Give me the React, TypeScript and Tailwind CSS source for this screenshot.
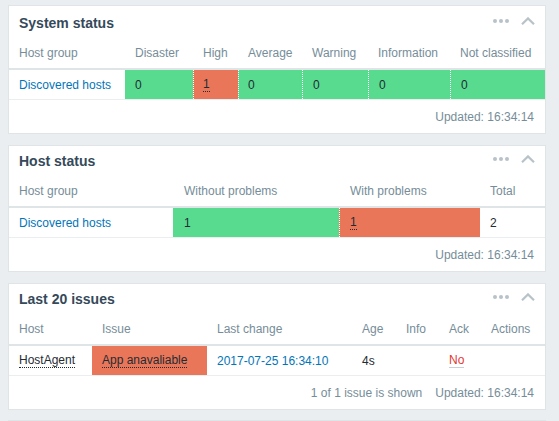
import React from "react";

const Icons = () => (
  <div className="flex items-center gap-[12px] mb-[4px]">
    <svg width="16" height="4" viewBox="0 0 16 4">
      <circle cx="2" cy="2" r="2" fill="#b7c2c9" />
      <circle cx="8" cy="2" r="2" fill="#b7c2c9" />
      <circle cx="14" cy="2" r="2" fill="#b7c2c9" />
    </svg>
    <svg width="14" height="8" viewBox="0 0 14 8">
      <polyline points="1,7.2 7,1.4 13,7.2" fill="none" stroke="#b7c2c9" strokeWidth="2.2" />
    </svg>
  </div>
);

function Panel({ title, first, last, children }: { title: string; first?: boolean; last?: boolean; children: React.ReactNode }) {
  return (
    <div className={(last ? "-mt-px " : "") + "w-[538px] bg-white border border-[#dfe4e7] shrink-0"}>
      <div className={(first ? "h-[32px] pt-[2px] " : "h-[30px] ") + "flex items-center justify-between pl-[10px] pr-[10px]"}>
        <div className="text-[14px] font-bold text-[#35495a] leading-none">{title}</div>
        <Icons />
      </div>
      {children}
    </div>
  );
}

const Footer = ({ children }: { children: React.ReactNode }) => (
  <div className="h-[33px] flex items-center justify-end gap-[13px] pr-[11px] text-[#768d99]">{children}</div>
);

const Dotted = ({ children }: { children: React.ReactNode }) => (
  <span className="border-b border-dotted border-[#1f2c33] leading-[14px] inline-block">{children}</span>
);

export default function App() {
  return (
    <div className="h-[421px] overflow-hidden bg-[#ebeef0] pt-[5px] pl-[8px] font-['Liberation_Sans',Arial,sans-serif] text-[12px] text-[#1f2c33]">
      <div className="flex flex-col gap-[11px]">
        <Panel title="System status" first>
          <div className="grid grid-cols-[116px_68px_45px_64px_66px_82px_95px] h-[32px] items-center text-[#768d99] border-b-2 border-[#dfe4e7]">
            {["Host group", "Disaster", "High", "Average", "Warning", "Information", "Not classified"].map((h) => (
              <div key={h} className="pl-[10px] whitespace-nowrap">{h}</div>
            ))}
          </div>
          <div className="grid grid-cols-[116px_68px_45px_64px_66px_82px_95px] h-[30px] border-b border-[#ebeef0]">
            <div className="pl-[10px] flex items-center text-[#0275b8]">Discovered hosts</div>
            <div className="pl-[10px] flex items-center bg-[#59db8f]">0</div>
            <div className="pl-[9px] flex items-center bg-[#e97659] border-l border-dotted border-white"><Dotted>1</Dotted></div>
            <div className="pl-[9px] flex items-center bg-[#59db8f] border-l border-dotted border-white">0</div>
            <div className="pl-[10px] flex items-center bg-[#59db8f] border-l border-dotted border-white">0</div>
            <div className="pl-[10px] flex items-center bg-[#59db8f] border-l border-dotted border-white">0</div>
            <div className="pl-[10px] flex items-center bg-[#59db8f] border-l border-dotted border-white">0</div>
          </div>
          <Footer>
            <span>Updated: 16:34:14</span>
          </Footer>
        </Panel>

        <Panel title="Host status">
          <div className="grid grid-cols-[164px_166px_141px_65px] h-[32px] items-center text-[#768d99] border-b-2 border-[#dfe4e7]">
            <div className="pl-[10px]">Host group</div>
            <div className="pl-[11px]">Without problems</div>
            <div className="pl-[11px]">With problems</div>
            <div className="pl-[10px]">Total</div>
          </div>
          <div className="grid grid-cols-[164px_166px_141px_65px] h-[30px] border-b border-[#ebeef0]">
            <div className="pl-[10px] flex items-center text-[#0275b8]">Discovered hosts</div>
            <div className="pl-[11px] flex items-center bg-[#59db8f]">1</div>
            <div className="pl-[10px] flex items-center bg-[#e97659] border-l border-dotted border-white"><Dotted>1</Dotted></div>
            <div className="pl-[10px] flex items-center">2</div>
          </div>
          <Footer>
            <span>Updated: 16:34:14</span>
          </Footer>
        </Panel>

        <Panel title="Last 20 issues">
          <div className="grid grid-cols-[83px_115px_145px_44px_43px_42px_64px] h-[32px] items-center text-[#768d99] border-b-2 border-[#dfe4e7]">
            {["Host", "Issue", "Last change", "Age", "Info", "Ack", "Actions"].map((h) => (
              <div key={h} className="pl-[10px] whitespace-nowrap">{h}</div>
            ))}
          </div>
          <div className="grid grid-cols-[83px_115px_145px_44px_43px_42px_64px] h-[30px] border-b border-[#ebeef0]">
            <div className="pl-[10px] flex items-center"><Dotted>HostAgent</Dotted></div>
            <div className="pl-[10px] flex items-center bg-[#e97659]"><Dotted>App anavaliable</Dotted></div>
            <div className="pl-[10px] flex items-center text-[#0275b8] whitespace-nowrap">2017-07-25 16:34:10</div>
            <div className="pl-[10px] flex items-center">4s</div>
            <div className="pl-[10px] flex items-center"></div>
            <div className="pl-[10px] flex items-center">
              <span className="text-[#e33734] border-b border-[#c8d0d5] leading-[14px] inline-block">No</span>
            </div>
            <div className="pl-[10px] flex items-center"></div>
          </div>
          <Footer>
            <span>1 of 1 issue is shown</span>
            <span>Updated: 16:34:14</span>
          </Footer>
        </Panel>

        <Panel title="" last>
          <div className="h-[100px]" />
        </Panel>
      </div>
    </div>
  );
}
